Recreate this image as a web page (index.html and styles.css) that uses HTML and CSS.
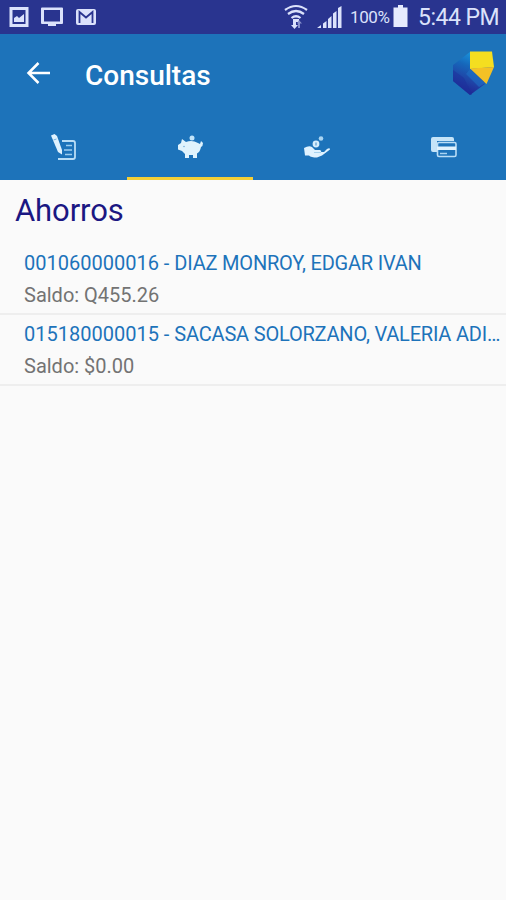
FILE: index.html
```html
<!DOCTYPE html>
<html lang="es">
<head>
<meta charset="utf-8">
<title>Consultas</title>
<link rel="stylesheet" href="styles.css">
</head>
<body>
<div class="status">
  <div class="notices">
    <svg width="20" height="22" viewBox="0 0 20 22"><path fill="#dbe2fb" fill-rule="evenodd" d="M.5 1h19v20H.5zM3.500 4v14h13V4z"/><path fill="#dbe2fb" d="M5 12l3-2 2 2 5-4v8H5z"/></svg>
    <svg width="24" height="22" viewBox="0 0 24 22"><path fill="#dbe2fb" fill-rule="evenodd" d="M2 1.500h20q1 0 1 1v14.500q0 1-1 1h-6v2H8v-2H2q-1 0-1-1V2.500q0-1 1-1zM4 4v11.500h16V4z"/></svg>
    <svg width="22" height="22" viewBox="0 0 22 22"><rect x="1" y="3" width="20" height="16" rx="2" fill="#dbe2fb"/><path d="M4.500 17V6l6.500 5.500L17.500 6v11" fill="none" stroke="#29348f" stroke-width="1.800"/></svg>
  </div>
  <div class="system">
    <svg class="wifi" width="26" height="26" viewBox="0 0 26 26"><g fill="none" stroke="#dbe2fb" stroke-width="2.200"><path d="M2 7q11-8 22 0M5 11q8-6 16 0M8.500 15q4.500-3.500 9 0"/></g><path fill="#dbe2fb" d="M10 16h6v3h-3v3h2l-3.500 4L8 22h2z"/><path fill="#8790cb" d="M16 17l3 3.500h-2V25h-2v-4.500h-1z"/></svg>
    <svg class="signal" width="25" height="24" viewBox="0 0 25 24"><path fill="#dbe2fb" d="M0 23l4-3v3zM6 18.500l3.500-2.500v7H6zM11 14l3.500-3v12H11zM16 8.500L19.500 6v17H16zM21 3l3.500-2v22H21z"/></svg>
    <span class="charge">100%</span>
    <svg class="battery" width="16" height="23" viewBox="0 0 16 23"><path fill="#e6ebfd" d="M5 0h5v2.500h4.500v19.500H.5V2.500H5z"/></svg>
    <span class="clock">5:44 PM</span>
  </div>
</div>
<header class="appbar">
  <div class="toolbar">
    <svg class="back" width="26" height="26" viewBox="0 0 26 26"><path d="M25 13H3.500M13.500 3l-10 10 10 10" fill="none" stroke="#fff" stroke-width="2.500"/></svg>
    <h1>Consultas</h1>
    <svg class="logo" width="44" height="46" viewBox="0 0 44 46">
      <defs>
        <linearGradient id="blue" x1="0.700" y1="0" x2="0.400" y2="1"><stop offset="0" stop-color="#1a9be0"/><stop offset=".35" stop-color="#1668bb"/><stop offset=".65" stop-color="#1f46a8"/><stop offset="1" stop-color="#211f8f"/></linearGradient>
      </defs>
      <path fill="url(#blue)" d="M18 1L1 14v16l17 14 15-11z"/>
      <path fill="#1c2f9b" opacity=".5" d="M1 19l11 8 8 17h-2L1 30z"/>
      <path fill="#1f70c4" opacity=".6" d="M18 18l15 14-6 4-13-13z"/>
      <path fill="#f4de20" d="M18 .5h22l2 15.500-24 2z"/>
      <path fill="#f3c125" d="M18 17.500L42 16l-7.500 17z"/>
    </svg>
  </div>
  <nav class="tabs">
    <div class="tab"><svg width="28" height="28" viewBox="0 0 28 28"><path d="M12 7h11q2 0 2 2v14q0 2-2 2H8" fill="none" stroke="#b9ddf6" stroke-width="1.800"/><path d="M16 11.500h6M14 16h8M15 20.500h7" stroke="#9dcdef" stroke-width="1.500"/><path fill="#dff2ff" d="M1 1.500L4.500 0 7 2l5 14v4.500L8 18z"/><path d="M3.500 6l3-1" stroke="#76b1df"/></svg></div>
    <div class="tab active"><svg width="28" height="28" viewBox="0 0 28 28"><circle cx="15" cy="4" r="2.500" fill="#c2e4fa"/><path fill="#e0f3fd" d="M5 5l4 3q6-2.500 12 1l2 1 1-3 2 2q0 3-2 4-1 5-4 6.500V24h-4v-3h-4v3H8v-4l-3-3-4-1.500V11l3-2z"/><circle cx="7" cy="12.500" r=".8" fill="#72addb"/></svg></div>
    <div class="tab"><svg width="28" height="28" viewBox="0 0 28 28"><path fill="#dff2ff" d="M1 14q5-3 8-1l3 3h5q2 1 1 2h3l3-3q3-1.500 3 .5l-8 6-5 2q-6 0-8-2H2z"/><path d="M11 18.500h7" stroke="#a5d2ef"/><circle cx="13" cy="10" r="3.400" fill="#d5edfc"/><path d="M13 8.500v3" stroke="#438bc5"/><circle cx="18" cy="4.500" r="2.300" fill="#a9d4f2"/></svg></div>
    <div class="tab"><svg width="28" height="28" viewBox="0 0 28 28"><path fill="#c5e4f8" d="M3 3h19q2 0 2 2v2H7v11H3q-2 0-2-2V5q0-2 2-2z"/><rect x="7.500" y="8.500" width="18.500" height="14" rx="1.500" fill="#1d73ba" stroke="#b9ddf6" stroke-width="1.600"/><path fill="#e0f2fd" d="M7 12.500h19v3.500H7z"/><path d="M10 19.500h7" stroke="#a9d4f2" stroke-width="1.500"/></svg></div>
  </nav>
</header>
<main>
  <h2>Ahorros</h2>
  <div class="account"><div class="name">001060000016 - <span>DIAZ MONROY, EDGAR IVAN</span></div><div class="balance">Saldo: Q455.26</div></div>
  <div class="account"><div class="name">015180000015 - <span>SACASA SOLORZANO, VALERIA ADI…</span></div><div class="balance">Saldo: $0.00</div></div>
</main>
</body>
</html>
```
FILE: styles.css
```css
* { box-sizing: border-box; }
body { margin: 0; min-height: 900px; overflow: hidden; background: #fafafa; font-family: Roboto, sans-serif; }
svg { display: block; flex: none; }
h1, h2 { margin: 0; }
.status { height: 34px; background: #29348f; display: flex; justify-content: space-between; color: #dbe2fb; }
.notices { display: flex; align-items: center; gap: 11px; padding-left: 9px; }
.system { display: flex; align-items: center; padding-right: 7px; white-space: nowrap; }
.wifi { margin-top: -2px; }
.signal { margin: 0 8px 0 8px; }
.charge { width: 40px; font-size: 17px; letter-spacing: -0.4px; }
.battery { margin: -1px 9px 0 3px; }
.clock { width: 81px; font-size: 23px; letter-spacing: -0.5px; }
.appbar { height: 146px; background: #1d73ba; }
.toolbar { height: 80px; display: flex; align-items: center; padding: 0 10px 0 25px; }
.back { margin-top: -2px; }
.toolbar h1 { margin: 4px auto 0 34px; color: #fff; font-size: 28px; font-weight: 500; line-height: 34px; }
.tabs { height: 66px; display: grid; grid-template-columns: repeat(4, 1fr); }
.tab { display: flex; justify-content: center; padding: 20px 0 0 2px; }
.active { border-bottom: 3px solid #f5cf35; }
main h2 { height: 64px; padding: 11px 15px 0; color: #1b1782; font-size: 31px; font-weight: 400; line-height: 39px; letter-spacing: -0.1px; }
.account { height: 71px; padding: 7px 0 0 24px; border-bottom: 2px solid #eee; white-space: nowrap; }
.name { height: 32px; line-height: 24px; font-size: 20px; color: #1d73ba; }
.name span { letter-spacing: -0.2px; }
.balance { line-height: 25px; font-size: 20px; color: #737373; }
```
